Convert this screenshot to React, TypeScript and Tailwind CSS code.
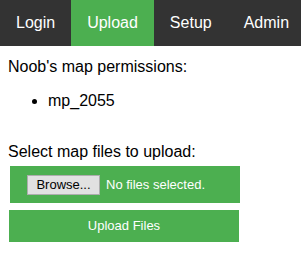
import React from "react";

const tabs = [
  { label: "Login", active: false },
  { label: "Upload", active: true },
  { label: "Setup", active: false },
  { label: "Admin", active: false },
];

export default function App(): React.JSX.Element {
  return (
    <div className="min-h-[254px] w-[301px] bg-white text-black" style={{ fontFamily: '"Liberation Sans", Arial, sans-serif' }}>
      {/* Top navigation */}
      <nav className="flex bg-[#333333]">
        {tabs.map((tab) => (
          <a
            key={tab.label}
            href="#"
            className={`block px-4 py-[14px] text-[16px] leading-[18px] text-white ${tab.active ? "bg-[#4caf50]" : ""}`}
          >
            {tab.label}
          </a>
        ))}
      </nav>

      <div className="px-2">
        <p className="mt-[12px] text-[16px] leading-[18px]">Noob's map permissions:</p>
        <ul className="mt-4 list-disc pl-10 text-[16px] leading-[18px]">
          <li>mp_2055</li>
        </ul>

        <form className="mt-[33px]">
          <p className="text-[16px] leading-[18px]">Select map files to upload:</p>

          {/* File picker */}
          <div className="ml-[2px] mt-[5px] flex h-[37px] w-[230px] items-center bg-[#4caf50] pl-[17px] text-[13px] text-white">
            <button
              type="button"
              className="h-[20px] w-[73px] border border-[#adadad] bg-[#e1e1e1] text-[13px] leading-[18px] text-black"
            >
              Browse...
            </button>
            <span className="ml-[6px]">No files selected.</span>
          </div>

          <button
            type="button"
            className="ml-[1px] mt-[7px] flex h-[32px] w-[230px] items-center justify-center bg-[#4caf50] text-[13px] text-white"
          >
            Upload Files
          </button>
        </form>
      </div>
    </div>
  );
}
